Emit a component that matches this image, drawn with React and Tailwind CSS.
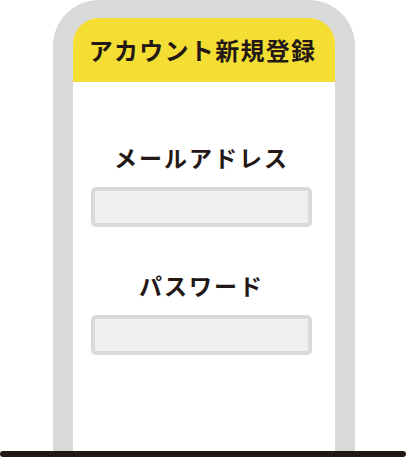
import React from 'react';

const font = { fontFamily: '"Noto Sans CJK JP", "Noto Sans", sans-serif' };

const Field = ({ label, type }) => (
    <div className="flex flex-col items-center">
        <label className="text-[23px] leading-[22px] font-bold tracking-[2px] text-[#231815]">{label}</label>
        <input
            type={type}
            className="mt-[19px] w-[221px] h-[40px] rounded-[5px] border-[4px] border-[#d9d9d9] bg-[#efefef] outline-none"
        />
    </div>
);

export default function App() {
    return (
        <div className="w-[406px] h-[457px] bg-white flex flex-col" style={font}>
            {/* phone frame */}
            <div className="ml-[53px] w-[302px] h-[451px] rounded-t-[46px] bg-[#d9d9d9] pt-[18px] px-[20px]">
                <div className="h-full rounded-t-[26px] bg-white overflow-hidden flex flex-col">
                    <div className="h-[64px] bg-[#f4de33] flex items-center justify-center pr-[3px]">
                        <h1 className="text-[24px] font-bold tracking-[1.3px] text-[#231815] leading-none">アカウント新規登録</h1>
                    </div>
                    <div className="pt-[64px] pr-[5px] flex flex-col gap-[47px]">
                        <Field label="メールアドレス" type="email" />
                        <Field label="パスワード" type="password" />
                    </div>
                </div>
            </div>
            {/* ground line */}
            <div className="h-[6px] w-full rounded-full bg-[#231815]" />
        </div>
    );
}
